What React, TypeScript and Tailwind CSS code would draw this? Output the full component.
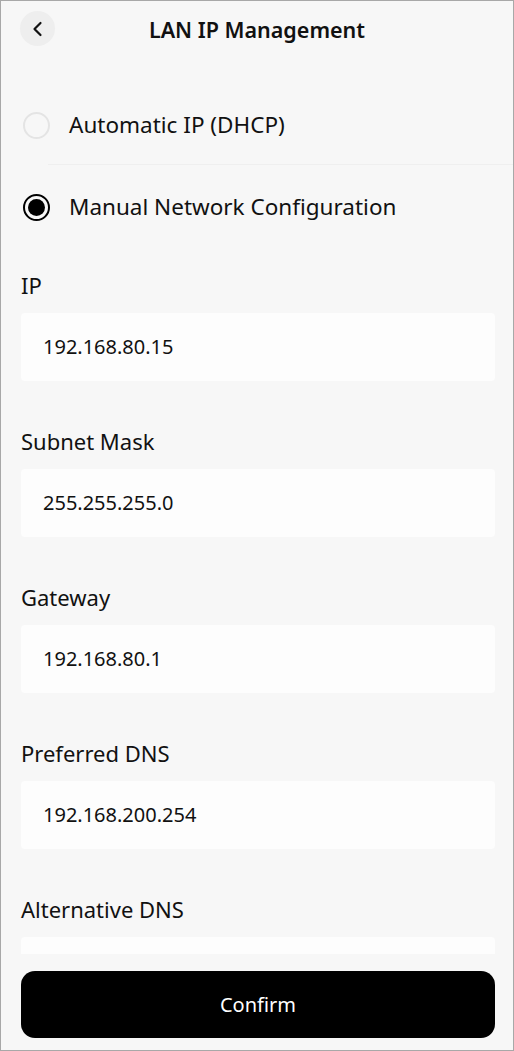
import React from "react";

const FIELDS = [
  { label: "IP", value: "192.168.80.15" },
  { label: "Subnet Mask", value: "255.255.255.0" },
  { label: "Gateway", value: "192.168.80.1" },
  { label: "Preferred DNS", value: "192.168.200.254" },
  { label: "Alternative DNS", value: "" },
];

function Radio({ checked }: { checked: boolean }) {
  return checked ? (
    <span className="w-[27px] h-[27px] rounded-full border-2 border-black flex items-center justify-center">
      <span className="w-[17px] h-[17px] rounded-full bg-black" />
    </span>
  ) : (
    <span className="w-[27px] h-[27px] rounded-full border-2 border-[#e4e4e4]" />
  );
}

export default function App() {
  const [mode, setMode] = React.useState<"dhcp" | "manual">("manual");

  return (
    <div
      className="h-[1051px] w-[514px] bg-[#f7f7f7] border border-[#a8a8a8] flex flex-col overflow-hidden text-[#111]"
      style={{ fontFamily: '"Noto Sans", "Open Sans", sans-serif' }}
    >
      {/* Header */}
      <div className="relative h-[58px] flex items-center justify-center shrink-0">
        <button className="absolute left-[19px] top-[10px] w-[35px] h-[35px] rounded-full bg-[#eeeeee] flex items-center justify-center">
          <svg width="14" height="16" viewBox="0 0 14 16" fill="none">
            <path d="M9.5 2 L3.5 8 L9.5 14" stroke="#111" strokeWidth="2.2" strokeLinecap="round" strokeLinejoin="round" />
          </svg>
        </button>
        <h1 className="text-[21.5px] font-semibold leading-none">LAN IP Management</h1>
      </div>

      {/* Scrollable content */}
      <div className="flex-1 overflow-hidden">
        <div className="pt-[38px]">
          <button
            onClick={() => setMode("dhcp")}
            className="w-full flex items-center h-[56px] pl-[22px]"
          >
            <Radio checked={mode === "dhcp"} />
            <span className="ml-[19px] text-[22.5px] leading-none">Automatic IP (DHCP)</span>
          </button>
          <div className="ml-[47px] border-t border-[#efefef] mt-[11px]" />
          <button
            onClick={() => setMode("manual")}
            className="w-full flex items-center h-[56px] pl-[22px] mt-[14px]"
          >
            <Radio checked={mode === "manual"} />
            <span className="ml-[19px] text-[22.5px] leading-none">Manual Network Configuration</span>
          </button>
        </div>

        <div className="pl-[20px] pr-[18px] pt-[36px] flex flex-col gap-[46px]">
          {FIELDS.map((f) => (
            <div key={f.label} className="flex flex-col">
              <label className="text-[22px] leading-[28px]">{f.label}</label>
              <div className="mt-[14px] h-[68px] bg-[#fdfdfd] rounded-[4px] flex items-center pl-[22px] text-[20px]">
                {f.value}
              </div>
            </div>
          ))}
        </div>
      </div>

      {/* Footer */}
      <div className="shrink-0 bg-[#f7f7f7] pl-[20px] pr-[18px] pt-[17px] pb-[12px]">
        <button className="w-full h-[67px] rounded-[14px] bg-black text-white text-[20px]">
          Confirm
        </button>
      </div>
    </div>
  );
}
